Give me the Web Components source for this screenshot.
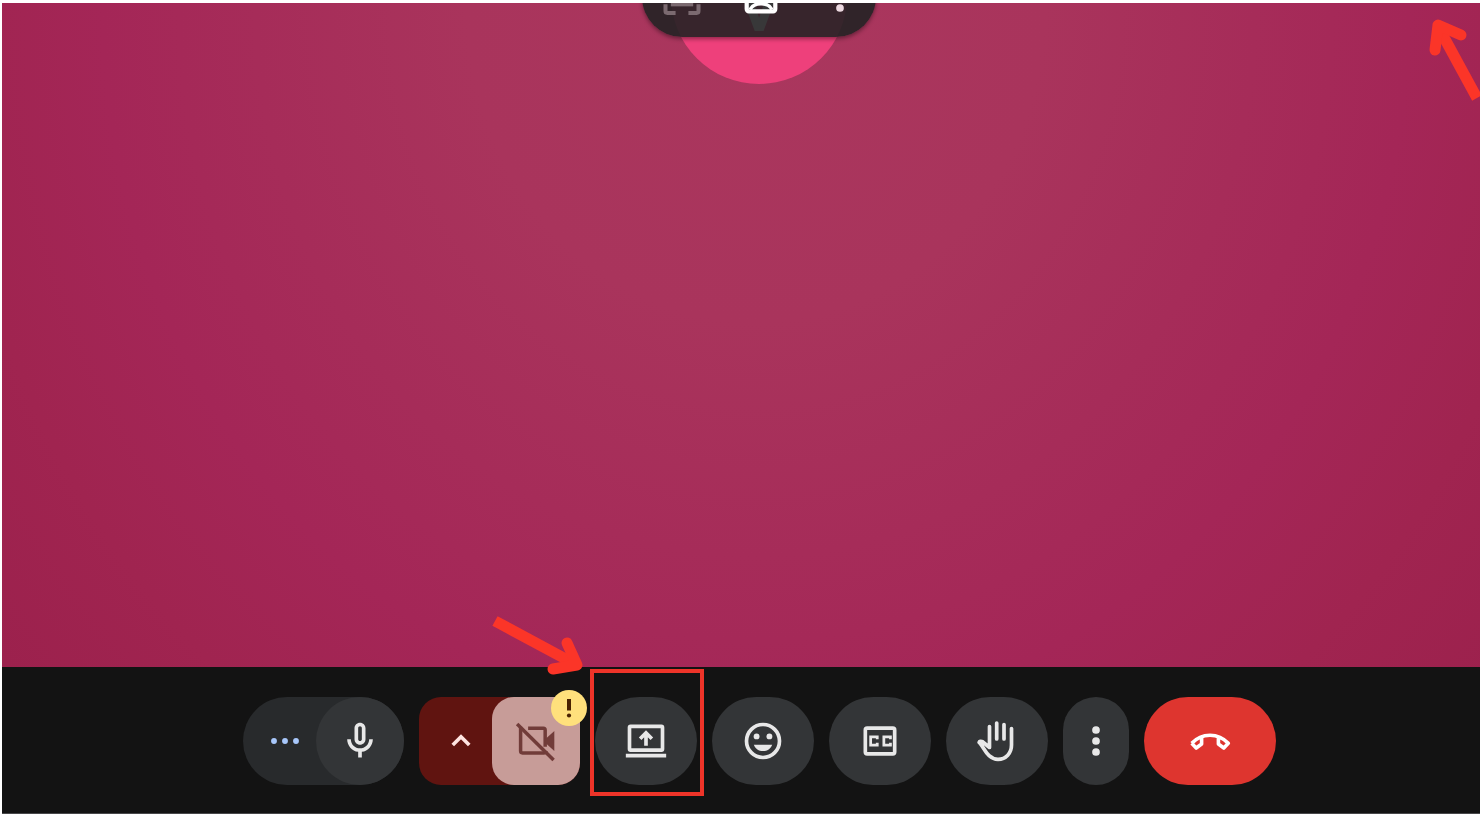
<!DOCTYPE html>
<html lang="en">
<head>
<meta charset="utf-8">
<title>Meeting</title>
<style>
    body {
        margin: 0;
        font-family: Roboto, sans-serif;
        background: #fff;
    }
</style>
</head>
<body>
<meeting-room>
    <video-stage initial="V">
        <tile-menu slot="menu"></tile-menu>
        <pointer-arrow slot="note" class="corner" direction="up"></pointer-arrow>
    </video-stage>
    <control-bar>
        <split-control kind="mic" more="Audio settings" label="Turn off microphone"></split-control>
        <split-control kind="cam" more="Video settings" label="Turn on camera" alert></split-control>
        <marked-control>
            <call-button icon="present" label="Present now"></call-button>
        </marked-control>
        <call-button icon="smile" label="Send a reaction"></call-button>
        <call-button icon="captions" label="Turn on captions"></call-button>
        <call-button icon="hand" label="Raise hand"></call-button>
        <call-button icon="more" label="More options" size="small"></call-button>
        <call-button icon="hangup" label="Leave call" size="large"></call-button>
    </control-bar>
</meeting-room>

<script>
const ICONS = {
    mic: `<path fill="currentColor" d="M12 14c1.66 0 3-1.34 3-3V5c0-1.66-1.34-3-3-3S9 3.34 9 5v6c0 1.66 1.34 3 3 3zm-1-9c0-.55.45-1 1-1s1 .45 1 1v6c0 .55-.45 1-1 1s-1-.45-1-1V5zm6 6c0 2.76-2.24 5-5 5s-5-2.24-5-5H5c0 3.53 2.61 6.43 6 6.92V21h2v-3.08c3.39-.49 6-3.39 6-6.92h-2z"/>`,
    camOff: `<g fill="none" stroke="currentColor" stroke-width="1.9"><path d="M3.6 4.2V17.5c0 .6.4 1 1 1H16.4c.6 0 1-.4 1-1"/><path d="M7.7 5H16c.6 0 1 .4 1 1v9.2"/><path d="M1.7 2.7 21.6 22.4"/></g><path fill="currentColor" d="M17 11 22 6.6v10.8L17 13z"/>`,
    present: `<g fill="none" stroke="currentColor" stroke-width="2"><rect x="3" y="4" width="18" height="13" rx=".6"/><path d="M1 20h22"/><path d="M12 14.6V8.2M8.8 10.8 12 7.6l3.2 3.2"/></g>`,
    smile: `<circle cx="12" cy="12" r="9" fill="none" stroke="currentColor" stroke-width="2"/><g fill="currentColor"><circle cx="8.5" cy="9.5" r="1.6"/><circle cx="15.5" cy="9.5" r="1.6"/><path d="M7 14h10c-.8 2.1-2.7 3.5-5 3.5S7.8 16.100 7 14z"/></g>`,
    captions: `<g fill="none" stroke="currentColor"><rect x="4" y="5" width="16" height="14" rx="1" stroke-width="2"/><path stroke-width="1.5" d="M10.500 11V9.700H6.900v4.600h3.600V13M17.700 11V9.700h-3.600v4.600h3.600V13"/></g>`,
    more: `<g fill="currentColor"><circle cx="12" cy="6" r="2.1"/><circle cx="12" cy="12" r="2.1"/><circle cx="12" cy="18" r="2.1"/></g>`,
    hand: `<g transform="scale(.5455)" fill="none" stroke="currentColor" stroke-width="3.7" stroke-linecap="round" stroke-linejoin="round"><path d="M14.5 7.5V28.5L7.5 22.7C6 21.8 4.4 22.3 4.1 23.4C9 27.5 12 40.3 23 40.3C31 40.3 36.5 34 36.5 26V9.5"/><path d="M21.7 4V20M29 5.5V20"/></g>`,
    hangup: `<g transform="scale(.5455)" fill="none" stroke="currentColor" stroke-width="3.6" stroke-linejoin="round"><path d="M3.7 24.3C13.7 13.5 30.3 13.5 40.3 24.3L35.8 29L30.4 25V18.5"/><path d="M13.6 18.5V25L8.2 29L3.7 24.3"/></g>`,
    chevron: `<path fill="none" stroke="currentColor" stroke-width="2" d="M7.5 14.2 12 9.7l4.5 4.5"/>`,
    dots: `<g fill="currentColor"><circle cx="6" cy="12" r="1.6"/><circle cx="12" cy="12" r="1.6"/><circle cx="18" cy="12" r="1.6"/></g>`,
    frame: `<g fill="none" stroke="currentColor" stroke-width="2.2"><path d="M3 8V4h5M16 4h5v4M3 16v3.700c0 .6.400 1 1 1H8.500M15.500 20.700H20c.6 0 1-.4 1-1V16"/><rect x="7" y="8" width="10" height="8"/></g>`,
    picture: `<g fill="none" stroke="currentColor" stroke-width="2.3"><rect x="4.200" y="4.500" width="15.600" height="15.300" rx="1.200"/><path stroke-width="1.900" d="M6 18.800c2.200-4.200 9.800-4.200 12 0"/></g>`
};

function icon(name) {
    return `<svg viewBox="0 0 24 24" width="44" height="44" aria-hidden="true">${ICONS[name]}</svg>`;
}

const BUTTON_RESET = `
    button {
        display: flex;
        align-items: center;
        justify-content: center;
        margin: 0;
        padding: 0;
        border: 0;
        cursor: pointer;
    }
    svg { display: block; flex: none; }
`;

class MeetingRoom extends HTMLElement {
    connectedCallback() {
        this.attachShadow({ mode: 'open' }).innerHTML = `
        <style>
            :host {
                display: flex;
                flex-direction: column;
                box-sizing: border-box;
                height: 100vh;
                padding: 3px 0 0 2px;
                overflow: hidden;
            }
        </style>
        <slot></slot>
        `;
    }
}

class VideoStage extends HTMLElement {
    connectedCallback() {
        this.attachShadow({ mode: 'open' }).innerHTML = `
        <style>
            :host {
                display: block;
                position: relative;
                flex: 1;
                overflow: hidden;
                background: radial-gradient(ellipse 65% 160% at 51% 0, #aa375e 0%, #a9345c 30%, #a62c59 52%, #a42657 68%, #a02450 84%, #9c214d 100%);
            }
            .person {
                display: flex;
                justify-content: center;
                padding-left: 36px;
            }
            .avatar {
                display: flex;
                align-items: center;
                justify-content: center;
                width: 176px;
                height: 176px;
                margin-top: -95px;
                border-radius: 50%;
                background: #ee407b;
                color: #fff;
                font-size: 104px;
                line-height: 1;
            }
            .menu {
                position: absolute;
                top: -46px;
                left: 36px;
                right: 0;
                display: flex;
                justify-content: center;
            }
            ::slotted(.corner) {
                position: absolute;
                top: 12px;
                right: 0;
            }
        </style>
        <div class="person"><div class="avatar">${this.getAttribute('initial')}</div></div>
        <div class="menu"><slot name="menu"></slot></div>
        <slot name="note"></slot>
        `;
    }
}

class TileMenu extends HTMLElement {
    connectedCallback() {
        this.attachShadow({ mode: 'open' }).innerHTML = `
        <style>
            ${BUTTON_RESET}
            :host {
                display: flex;
                gap: 9px;
                box-sizing: border-box;
                width: 234px;
                height: 80px;
                padding-left: 5px;
                border-radius: 40px;
                background: rgba(34, 34, 36, 0.9);
                box-shadow: 0 2px 4px rgba(0, 0, 0, 0.4);
            }
            button {
                width: 70px;
                background: none;
                color: #fff;
            }
            button:disabled { color: #7b6a70; }
            button:last-child { color: #ecd9e0; }
        </style>
        <button aria-label="Pin" disabled>${icon('frame')}</button>
        <button aria-label="Apply visual effects">${icon('picture')}</button>
        <button aria-label="More options">${icon('more')}</button>
        `;
    }
}

class ControlBar extends HTMLElement {
    connectedCallback() {
        this.attachShadow({ mode: 'open' }).innerHTML = `
        <style>
            :host {
                display: flex;
                justify-content: center;
                gap: 15px;
                padding: 30px 0 28px 36px;
                background: #131313;
                border-bottom: 1px solid #48484a;
            }
        </style>
        <slot></slot>
        `;
    }
}

class CallButton extends HTMLElement {
    connectedCallback() {
        this.attachShadow({ mode: 'open' }).innerHTML = `
        <style>
            ${BUTTON_RESET}
            :host { display: block; }
            button {
                width: 102px;
                height: 88px;
                border-radius: 44px;
                background: #333537;
                color: #e8e8e8;
            }
            :host([size="small"]) button { width: 66px; }
            :host([size="large"]) button {
                width: 132px;
                background: #de352f;
                color: #fff;
            }
        </style>
        <button aria-label="${this.getAttribute('label')}">${icon(this.getAttribute('icon'))}</button>
        `;
    }
}

class SplitControl extends HTMLElement {
    connectedCallback() {
        const cam = this.getAttribute('kind') === 'cam';
        const badge = `
        <svg class="badge" viewBox="0 0 36 36" width="36" height="36" role="img" aria-label="Permission needed">
            <circle cx="18" cy="18" r="18" fill="#ffe07c"/>
            <path d="M16 9h4v11.5h-4z" fill="#4a2200"/>
            <circle cx="18" cy="25.5" r="2.1" fill="#4a2200"/>
        </svg>`;
        this.attachShadow({ mode: 'open' }).innerHTML = `
        <style>
            ${BUTTON_RESET}
            :host {
                display: flex;
                position: relative;
                height: 88px;
                border-radius: 44px;
                background: #282a2c;
            }
            .more {
                width: 73px;
                padding-left: 12px;
                background: none;
                color: #a8c7fa;
            }
            .main {
                width: 88px;
                border-radius: 44px;
                background: #333537;
                color: #e8e8e8;
            }
            :host([kind="cam"]) {
                border-radius: 22px;
                background: #601410;
            }
            :host([kind="cam"]) .more { color: #ffe4e1; }
            :host([kind="cam"]) .main {
                border-radius: 22px;
                background: #c79c98;
                color: #713c39;
            }
            .badge {
                position: absolute;
                top: -7px;
                right: -7px;
            }
        </style>
        <button class="more" aria-label="${this.getAttribute('more')}">${icon(cam ? 'chevron' : 'dots')}</button>
        <button class="main" aria-label="${this.getAttribute('label')}">${icon(cam ? 'camOff' : 'mic')}</button>
        ${this.hasAttribute('alert') ? badge : ''}
        `;
    }
}

// red box around a control, with an arrow that points at its corner
class MarkedControl extends HTMLElement {
    connectedCallback() {
        this.attachShadow({ mode: 'open' }).innerHTML = `
        <style>
            :host {
                display: block;
                position: relative;
            }
            .box {
                position: absolute;
                inset: -28px -7px -11px -5px;
                border: 4px solid #ee3429;
                pointer-events: none;
            }
            pointer-arrow {
                position: absolute;
                top: -87px;
                left: -104px;
            }
        </style>
        <slot></slot>
        <div class="box"></div>
        <pointer-arrow direction="down"></pointer-arrow>
        `;
    }
}

class PointerArrow extends HTMLElement {
    connectedCallback() {
        const down = this.getAttribute('direction') === 'down';
        const shape = down
            ? `<svg viewBox="0 0 100 70" width="100" height="70">
                <path d="M4 11 84 54"/>
                <path class="head" d="M76 33 86 55 62 59"/>
            </svg>`
            : `<svg viewBox="0 0 60 90" width="60" height="90">
                <path d="M57 83 20 15"/>
                <path class="head" d="M41 20 18 10 15 35"/>
            </svg>`;
        this.attachShadow({ mode: 'open' }).innerHTML = `
        <style>
            :host {
                display: block;
                pointer-events: none;
            }
            svg {
                display: block;
                fill: none;
                stroke: #fb3528;
                stroke-width: 11;
            }
            .head {
                stroke-linecap: round;
                stroke-linejoin: round;
            }
        </style>
        ${shape}
        `;
    }
}

customElements.define('meeting-room', MeetingRoom);
customElements.define('video-stage', VideoStage);
customElements.define('tile-menu', TileMenu);
customElements.define('control-bar', ControlBar);
customElements.define('call-button', CallButton);
customElements.define('split-control', SplitControl);
customElements.define('marked-control', MarkedControl);
customElements.define('pointer-arrow', PointerArrow);
</script>
</body>
</html>
